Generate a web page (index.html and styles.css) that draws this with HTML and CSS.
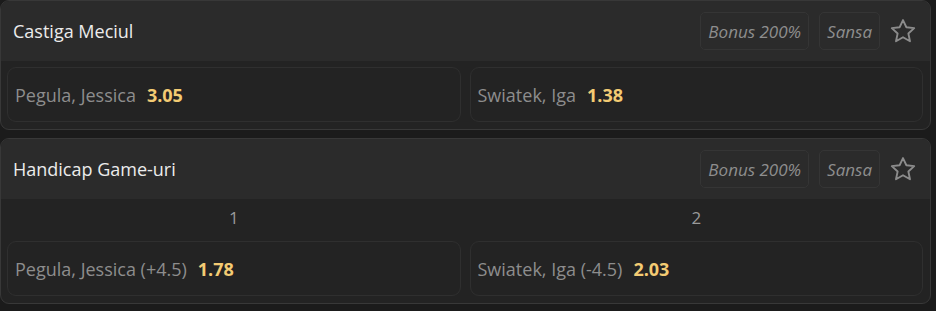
FILE: index.html
```html
<!DOCTYPE html>
<html>
<head>
<meta charset="utf-8">
<link rel="stylesheet" href="styles.css">
</head>
<body>
<div class="list">
  <section class="market">
    <header class="market-head">
      <h2 class="market-title">Castiga Meciul</h2>
      <div class="tools">
        <span class="badge">Bonus 200%</span>
        <span class="badge">Sansa</span>
        <svg class="star" viewBox="0 0 24 24" width="28" height="28"><path d="M12 2.6l2.9 6.2 6.7.7-5 4.6 1.4 6.7L12 17.4l-6 3.4 1.4-6.7-5-4.6 6.7-.7z" fill="none" stroke="#8c8c8c" stroke-width="1.6" stroke-linejoin="round"/></svg>
      </div>
    </header>
    <div class="market-body">
      <div class="outcomes">
        <div class="outcome"><span class="name">Pegula, Jessica</span><span class="odd">3.05</span></div>
        <div class="outcome"><span class="name">Swiatek, Iga</span><span class="odd">1.38</span></div>
      </div>
    </div>
  </section>
  <section class="market">
    <header class="market-head">
      <h2 class="market-title">Handicap Game-uri</h2>
      <div class="tools">
        <span class="badge">Bonus 200%</span>
        <span class="badge">Sansa</span>
        <svg class="star" viewBox="0 0 24 24" width="28" height="28"><path d="M12 2.6l2.9 6.2 6.7.7-5 4.6 1.4 6.7L12 17.4l-6 3.4 1.4-6.7-5-4.6 6.7-.7z" fill="none" stroke="#8c8c8c" stroke-width="1.6" stroke-linejoin="round"/></svg>
      </div>
    </header>
    <div class="market-body">
      <div class="cols">
        <span class="col-label">1</span>
        <span class="col-label">2</span>
      </div>
      <div class="outcomes">
        <div class="outcome"><span class="name">Pegula, Jessica (+4.5)</span><span class="odd">1.78</span></div>
        <div class="outcome"><span class="name">Swiatek, Iga (-4.5)</span><span class="odd">2.03</span></div>
      </div>
    </div>
  </section>
</div>
</body>
</html>
```
FILE: styles.css
```css
html, body {
  margin: 0;
  padding: 0;
  background: #1b1b1b;
}
body {
  font-family: "Open Sans", "Noto Sans", sans-serif;
  width: 936px;
  height: 311px;
  overflow: hidden;
}
.list {
  display: flex;
  flex-direction: column;
  gap: 8px;
  width: 931px;
}
.market {
  border: 1px solid #383838;
  border-radius: 9px;
  background: #232323;
  overflow: hidden;
}
.market-head {
  height: 60px;
  background: #2b2b2b;
  display: flex;
  align-items: center;
  justify-content: space-between;
  padding: 0 13px 0 12px;
}
.market-title {
  margin: 0;
  font-size: 18px;
  font-weight: 500;
  color: #ececec;
}
.tools {
  display: flex;
  align-items: center;
  gap: 10px;
}
.badge {
  height: 38px;
  box-sizing: border-box;
  padding: 0 7px;
  display: flex;
  align-items: center;
  border: 1px solid #353535;
  border-radius: 5px;
  font-style: italic;
  font-size: 17px;
  color: #8e8e8e;
}
.star {
  display: block;
  margin-left: -1px;
}
.market-body {
  padding: 6px 7px 7px 6px;
}
.cols {
  display: grid;
  grid-template-columns: 1fr 1fr;
  gap: 9px;
  height: 24px;
  align-items: center;
  margin-bottom: 12px;
}
.col-label {
  text-align: center;
  color: #9a9a9a;
  font-size: 17px;
}
.outcomes {
  display: grid;
  grid-template-columns: 1fr 1fr;
  gap: 9px;
}
.outcome {
  height: 55px;
  box-sizing: border-box;
  border: 1px solid #2f2f2f;
  border-radius: 9px;
  display: flex;
  align-items: center;
  padding: 0 7px;
  gap: 11px;
  font-size: 18px;
}
.name {
  color: #8d8d8d;
}
.odd {
  color: #f3cb73;
  font-weight: 700;
}
```
